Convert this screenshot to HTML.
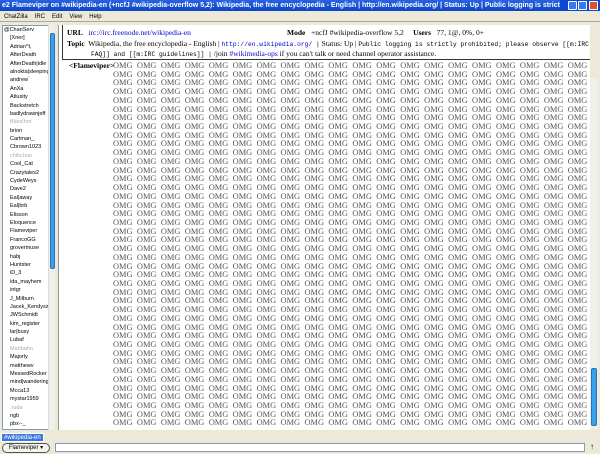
<!DOCTYPE html>
<html><head><meta charset="utf-8"><style>
*{margin:0;padding:0;box-sizing:border-box}
body{width:600px;height:454px;overflow:hidden;background:#ece9d8;font-family:"Liberation Sans",sans-serif;position:relative}
.title{position:absolute;left:0;top:0;width:560px;height:11px;background:linear-gradient(#2a63e0,#0a44c8);color:#fff;font:bold 7px "Liberation Sans",sans-serif;line-height:11px;padding-left:2px;white-space:nowrap;overflow:hidden}
.tb{position:absolute;left:560px;top:0;width:40px;height:11px;background:#0a48d0}
.btn{position:absolute;top:1px;width:9px;height:9px;border:1px solid #fff;border-radius:1px;background:#3a78f0}
.menu{position:absolute;left:0;top:12px;width:600px;height:10px;font-size:6px;line-height:10px;color:#000;border-bottom:1px solid #aca899}
.menu span{margin-left:4px;margin-right:3px}
.ul{position:absolute;left:2px;top:25px;width:53px;height:405px;background:#fff;border:1px solid #7f9db9;overflow:hidden}
.ul div{font-size:5.5px;height:8.4px;line-height:8.4px;padding-left:7px;white-space:nowrap}
.ul .g{color:#aaa}
.sb{position:absolute;left:48px;top:25px;width:7px;height:405px;background:#f0f0ea;border-left:1px solid #ddd}
.thumb{position:absolute;left:1px;width:5px;background:#3aa0e8;border:1px solid #2570c0;border-radius:2px}
.main{position:absolute;left:58px;top:25px;width:532px;height:405px;background:#fff;border-left:1px solid #999;overflow:hidden}
.hdr{position:absolute;left:3px;top:0;width:533px;height:35px;border:1px solid #333;border-top:none;font-family:"Liberation Serif",serif;font-size:7.5px}
.hdr b{font-weight:bold}
.mono{font-family:"Liberation Mono",monospace;font-size:6.3px}
a{color:#0000cc;text-decoration:none}
.chat{position:absolute;left:54px;top:37px;font-family:"Liberation Serif",serif;font-size:8.4px;line-height:8.72px;white-space:nowrap;word-spacing:2.3px;color:#555}
.nick{position:absolute;left:10px;top:37px;font:bold 7.5px "Liberation Serif",serif;line-height:8.72px}
.sb2{position:absolute;left:590px;top:78px;width:8px;height:352px;background:#f0f0ea}
.tab{position:absolute;left:1px;top:433px;width:43px;height:9px;background:#3a78e0;color:#fff;font-size:6px;line-height:9px;padding-left:2px;border:1px solid #fff}
.inp{position:absolute;left:55px;top:443px;width:530px;height:9px;background:#fff;border:1px solid #7f9db9}
.nb{position:absolute;left:2px;top:443px;width:48px;height:10px;border:1px solid #555;border-radius:5px;background:#f4f4f0;font-size:6px;line-height:8px;text-align:center}
</style></head><body>
<div class="title">e2 Flameviper on #wikipedia-en (+ncfJ #wikipedia-overflow 5,2): Wikipedia, the free encyclopedia - English | http://en.wikipedia.org/ | Status: Up | Public logging is strictly prohibited; plea...</div>
<div class="tb"></div>
<div class="btn" style="left:568px"></div><div class="btn" style="left:578px"></div><div class="btn" style="left:589px;background:#e0502a"></div>
<div class="menu"><span>ChatZilla</span><span>IRC</span><span>Edit</span><span>View</span><span>Help</span></div>
<div class="ul">
<div style="padding-left:1px">@ChanServ</div><div>[Xner]</div><div>Adrian^t,</div><div>AfterDeath</div><div>AfterDeath|idle</div><div>alnokta|sleeping</div><div>andrew`</div><div>AnXa</div><div>Atlusity</div><div>Backstretch</div><div>badlydrawnjeff</div><div class="g">Blanchot</div><div>brion</div><div>Cartman_</div><div>Cbrown1023</div><div class="g">chihchun</div><div>Cool_Cat</div><div>Crazytales2</div><div>CydeWeys</div><div>Dave2</div><div>Eal|away</div><div>Eal|brb</div><div>Elisson</div><div>Eloquence</div><div>Flameviper</div><div>FrancoGG</div><div>grovermuse</div><div>habj</div><div>Huntster</div><div>iD_3</div><div>ida_mayhem</div><div>intgr</div><div>J_Milburn</div><div>Jacek_Kendysz</div><div>JWSchmidt</div><div>kim_register</div><div>lar|busy</div><div>Lubaf</div><div class="g">Mahbahn</div><div>Majorly</div><div>matthewv</div><div>MessedRocker</div><div>mind|wandering</div><div>Mcca13</div><div>mystar1959</div><div class="g">.ruda</div><div>ngb</div><div>pbx--_</div>
</div>
<div class="sb"><div class="thumb" style="top:8px;height:236px"></div></div>
<div class="main">
<div class="hdr">
<div style="position:absolute;left:4px;top:3px"><b>URL</b>&nbsp;&nbsp; <a>irc://irc.freenode.net/wikipedia-en</a></div>
<div style="position:absolute;left:224px;top:3px;white-space:nowrap"><b>Mode</b>&nbsp;&nbsp; +ncfJ #wikipedia-overflow 5,2&nbsp;&nbsp;&nbsp;&nbsp; <b>Users</b>&nbsp;&nbsp; 77, 1@, 0%, 0+</div>
<div style="position:absolute;left:4px;top:14px;white-space:nowrap"><b>Topic</b>&nbsp; Wikipedia, the free encyclopedia - English | <span class="mono"><a>http://en.wikipedia.org/</a> |</span> Status: Up | <span class="mono">Public logging is strictly prohibited; please observe [[m:IRC</span></div>
<div style="position:absolute;left:28px;top:24px;white-space:nowrap"><span class="mono">FAQ]] and [[m:IRC guidelines]] |</span> /join <a>#wikimedia-ops</a> if you can't talk or need channel operator assistance.</div>
</div>
<div class="nick">&lt;Flameviper&gt;</div>
<div class="chat">
OMG OMG OMG OMG OMG OMG OMG OMG OMG OMG OMG OMG OMG OMG OMG OMG OMG OMG OMG OMG<br>OMG OMG OMG OMG OMG OMG OMG OMG OMG OMG OMG OMG OMG OMG OMG OMG OMG OMG OMG OMG<br>OMG OMG OMG OMG OMG OMG OMG OMG OMG OMG OMG OMG OMG OMG OMG OMG OMG OMG OMG OMG<br>OMG OMG OMG OMG OMG OMG OMG OMG OMG OMG OMG OMG OMG OMG OMG OMG OMG OMG OMG OMG<br>OMG OMG OMG OMG OMG OMG OMG OMG OMG OMG OMG OMG OMG OMG OMG OMG OMG OMG OMG OMG<br>OMG OMG OMG OMG OMG OMG OMG OMG OMG OMG OMG OMG OMG OMG OMG OMG OMG OMG OMG OMG<br>OMG OMG OMG OMG OMG OMG OMG OMG OMG OMG OMG OMG OMG OMG OMG OMG OMG OMG OMG OMG<br>OMG OMG OMG OMG OMG OMG OMG OMG OMG OMG OMG OMG OMG OMG OMG OMG OMG OMG OMG OMG<br>OMG OMG OMG OMG OMG OMG OMG OMG OMG OMG OMG OMG OMG OMG OMG OMG OMG OMG OMG OMG<br>OMG OMG OMG OMG OMG OMG OMG OMG OMG OMG OMG OMG OMG OMG OMG OMG OMG OMG OMG OMG<br>OMG OMG OMG OMG OMG OMG OMG OMG OMG OMG OMG OMG OMG OMG OMG OMG OMG OMG OMG OMG<br>OMG OMG OMG OMG OMG OMG OMG OMG OMG OMG OMG OMG OMG OMG OMG OMG OMG OMG OMG OMG<br>OMG OMG OMG OMG OMG OMG OMG OMG OMG OMG OMG OMG OMG OMG OMG OMG OMG OMG OMG OMG<br>OMG OMG OMG OMG OMG OMG OMG OMG OMG OMG OMG OMG OMG OMG OMG OMG OMG OMG OMG OMG<br>OMG OMG OMG OMG OMG OMG OMG OMG OMG OMG OMG OMG OMG OMG OMG OMG OMG OMG OMG OMG<br>OMG OMG OMG OMG OMG OMG OMG OMG OMG OMG OMG OMG OMG OMG OMG OMG OMG OMG OMG OMG<br>OMG OMG OMG OMG OMG OMG OMG OMG OMG OMG OMG OMG OMG OMG OMG OMG OMG OMG OMG OMG<br>OMG OMG OMG OMG OMG OMG OMG OMG OMG OMG OMG OMG OMG OMG OMG OMG OMG OMG OMG OMG<br>OMG OMG OMG OMG OMG OMG OMG OMG OMG OMG OMG OMG OMG OMG OMG OMG OMG OMG OMG OMG<br>OMG OMG OMG OMG OMG OMG OMG OMG OMG OMG OMG OMG OMG OMG OMG OMG OMG OMG OMG OMG<br>OMG OMG OMG OMG OMG OMG OMG OMG OMG OMG OMG OMG OMG OMG OMG OMG OMG OMG OMG OMG<br>OMG OMG OMG OMG OMG OMG OMG OMG OMG OMG OMG OMG OMG OMG OMG OMG OMG OMG OMG OMG<br>OMG OMG OMG OMG OMG OMG OMG OMG OMG OMG OMG OMG OMG OMG OMG OMG OMG OMG OMG OMG<br>OMG OMG OMG OMG OMG OMG OMG OMG OMG OMG OMG OMG OMG OMG OMG OMG OMG OMG OMG OMG<br>OMG OMG OMG OMG OMG OMG OMG OMG OMG OMG OMG OMG OMG OMG OMG OMG OMG OMG OMG OMG<br>OMG OMG OMG OMG OMG OMG OMG OMG OMG OMG OMG OMG OMG OMG OMG OMG OMG OMG OMG OMG<br>OMG OMG OMG OMG OMG OMG OMG OMG OMG OMG OMG OMG OMG OMG OMG OMG OMG OMG OMG OMG<br>OMG OMG OMG OMG OMG OMG OMG OMG OMG OMG OMG OMG OMG OMG OMG OMG OMG OMG OMG OMG<br>OMG OMG OMG OMG OMG OMG OMG OMG OMG OMG OMG OMG OMG OMG OMG OMG OMG OMG OMG OMG<br>OMG OMG OMG OMG OMG OMG OMG OMG OMG OMG OMG OMG OMG OMG OMG OMG OMG OMG OMG OMG<br>OMG OMG OMG OMG OMG OMG OMG OMG OMG OMG OMG OMG OMG OMG OMG OMG OMG OMG OMG OMG<br>OMG OMG OMG OMG OMG OMG OMG OMG OMG OMG OMG OMG OMG OMG OMG OMG OMG OMG OMG OMG<br>OMG OMG OMG OMG OMG OMG OMG OMG OMG OMG OMG OMG OMG OMG OMG OMG OMG OMG OMG OMG<br>OMG OMG OMG OMG OMG OMG OMG OMG OMG OMG OMG OMG OMG OMG OMG OMG OMG OMG OMG OMG<br>OMG OMG OMG OMG OMG OMG OMG OMG OMG OMG OMG OMG OMG OMG OMG OMG OMG OMG OMG OMG<br>OMG OMG OMG OMG OMG OMG OMG OMG OMG OMG OMG OMG OMG OMG OMG OMG OMG OMG OMG OMG<br>OMG OMG OMG OMG OMG OMG OMG OMG OMG OMG OMG OMG OMG OMG OMG OMG OMG OMG OMG OMG<br>OMG OMG OMG OMG OMG OMG OMG OMG OMG OMG OMG OMG OMG OMG OMG OMG OMG OMG OMG OMG<br>OMG OMG OMG OMG OMG OMG OMG OMG OMG OMG OMG OMG OMG OMG OMG OMG OMG OMG OMG OMG<br>OMG OMG OMG OMG OMG OMG OMG OMG OMG OMG OMG OMG OMG OMG OMG OMG OMG OMG OMG OMG<br>OMG OMG OMG OMG OMG OMG OMG OMG OMG OMG OMG OMG OMG OMG OMG OMG OMG OMG OMG OMG<br>OMG OMG OMG OMG OMG OMG OMG OMG OMG OMG OMG OMG OMG OMG OMG OMG OMG OMG OMG OMG
</div>
</div>
<div class="sb2"><div class="thumb" style="left:1px;top:290px;height:58px;width:6px"></div></div>
<div class="tab">#wikipedia-en</div>
<div class="nb">Flameviper ▾</div>
<div class="inp"></div>
<div style="position:absolute;left:590px;top:442px;font-size:8px">↑</div>
</body></html>
